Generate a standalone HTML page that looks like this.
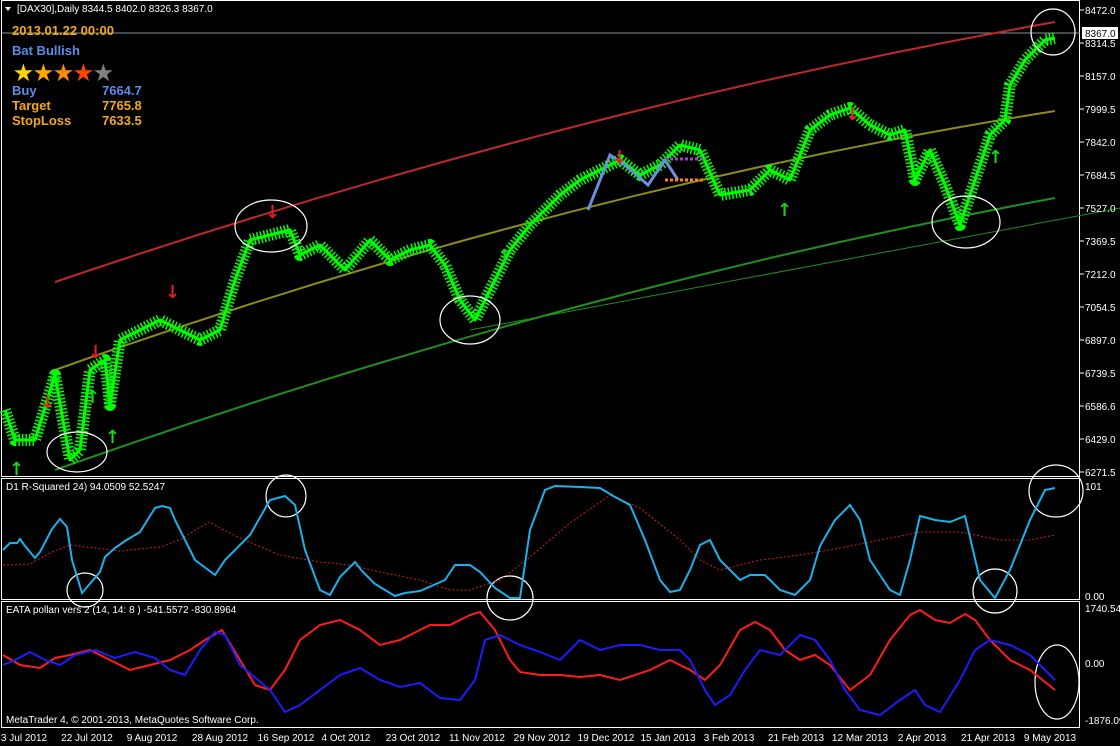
<!DOCTYPE html><html><head><meta charset="utf-8"><style>
body{margin:0;background:#000;width:1120px;height:746px;overflow:hidden;font-family:"Liberation Sans",sans-serif}
svg{display:block}
.ax{fill:#fff;font-size:10px;font-family:"Liberation Sans",sans-serif}
</style></head><body>
<svg width="1120" height="746" viewBox="0 0 1120 746" xmlns="http://www.w3.org/2000/svg">
<rect width="1120" height="746" fill="#000"/>
<rect x="1.5" y="0.5" width="1078" height="476" fill="none" stroke="#fff"/>
<rect x="1.5" y="478.5" width="1078" height="121" fill="none" stroke="#fff"/>
<rect x="1.5" y="601.5" width="1078" height="126" fill="none" stroke="#fff"/>
<line x1="2" y1="33" x2="1080" y2="33" stroke="#8a8f99"/>
<path d="M55,282 Q560,110 1055,22" stroke="#c0282b" stroke-width="2" fill="none"/>
<path d="M55,370 Q560,190 1055,111" stroke="#8b8b1a" stroke-width="2" fill="none"/>
<path d="M55,470 Q560,290 1055,198" stroke="#1f8f1f" stroke-width="2" fill="none"/>
<path d="M470,330 L1120,208" stroke="#1f8f1f" stroke-width="1" fill="none"/>
<g fill="none" stroke="#00ff00" stroke-linejoin="round">
<polyline stroke-width="12" stroke-dasharray="1.5,2" points="5,410 15,440 35,440 55,375 70,460 80,450 90,370 105,360 110,405 120,340 160,320 180,330 200,340 220,330 235,280 250,240 270,235 290,230 300,255 320,245 345,270 370,240 390,260 410,250 430,245 445,265 460,300 475,320 490,290 510,250 530,225 560,195 580,180 600,170 620,160 640,175 660,165 680,145 700,150 720,195 750,190 770,170 790,180 810,130 830,115 850,108 870,125 890,135 905,130 915,180 930,150 945,185 960,225 975,180 990,135 1005,120 1010,85 1025,60 1045,40 1055,38"/>
<polyline stroke-width="3" points="5,410 15,440 35,440 55,375 70,460 80,450 90,370 105,360 110,405 120,340 160,320 180,330 200,340 220,330 235,280 250,240 270,235 290,230 300,255 320,245 345,270 370,240 390,260 410,250 430,245 445,265 460,300 475,320 490,290 510,250 530,225 560,195 580,180 600,170 620,160 640,175 660,165 680,145 700,150 720,195 750,190 770,170 790,180 810,130 830,115 850,108 870,125 890,135 905,130 915,180 930,150 945,185 960,225 975,180 990,135 1005,120 1010,85 1025,60 1045,40 1055,38"/>
</g>
<polyline points="588,210 610,155 625,165 648,185 665,160 678,180" stroke="#6b8fe0" stroke-width="3" fill="none"/>
<line x1="665" y1="159" x2="705" y2="159" stroke="#a040d0" stroke-width="3" stroke-dasharray="3,2"/>
<line x1="665" y1="180" x2="705" y2="180" stroke="#ff7f20" stroke-width="3" stroke-dasharray="3,2"/>
<g fill="#e02020" font-size="18" font-weight="bold" font-family="DejaVu Sans">
<text x="40" y="408">↓</text><text x="88" y="358">↓</text><text x="165" y="298">↓</text><text x="265" y="218">↓</text><text x="612" y="163">↓</text><text x="845" y="120">↓</text></g>
<g fill="#20d020" font-size="18" font-weight="bold" font-family="DejaVu Sans">
<text x="9" y="475">↑</text><text x="105" y="443">↑</text><text x="85" y="403">↑</text><text x="497" y="262">↑</text><text x="777" y="216">↑</text><text x="988" y="163">↑</text></g>
<g fill="none" stroke="#fff" stroke-width="1.2">
<ellipse cx="77" cy="452" rx="30" ry="20"/><ellipse cx="271" cy="226" rx="36" ry="26"/><ellipse cx="470" cy="320" rx="30" ry="24"/><ellipse cx="966" cy="222" rx="34" ry="26"/><ellipse cx="1053" cy="32" rx="22" ry="23"/>
<ellipse cx="286" cy="496" rx="20" ry="21"/><ellipse cx="85" cy="590" rx="18" ry="17"/><ellipse cx="510" cy="598" rx="23" ry="22"/><ellipse cx="995" cy="591" rx="22" ry="22"/><ellipse cx="1056" cy="491" rx="27" ry="26"/>
<ellipse cx="1057" cy="682" rx="22" ry="37"/></g>
<polyline fill="none" stroke="#d02020" stroke-dasharray="2,2" points="3,565 30,564 50,553 70,545 95,548 120,551 160,547 180,540 200,527 210,522 220,528 240,538 280,555 320,562 350,565 380,572 420,580 450,590 470,590 500,580 530,557 570,523 610,495 640,508 680,540 700,560 720,570 760,560 800,555 840,548 880,540 920,532 960,532 1000,540 1030,540 1055,535"/>
<polyline fill="none" stroke="#1ab2ea" stroke-width="2" points="3,550 10,543 17,543 20,539 25,546 35,558 40,552 52,529 60,519 67,527 72,560 82,593 100,572 105,557 115,548 125,541 140,532 155,508 162,506 170,508 175,520 190,550 195,560 215,575 225,560 250,535 270,500 285,496 295,505 305,550 320,590 330,595 340,577 355,562 362,571 375,584 395,596 405,593 420,591 445,580 455,565 470,565 480,572 495,588 510,598 520,598 530,530 545,490 555,486 580,487 600,488 615,497 630,505 645,540 660,580 670,592 680,590 690,570 700,545 710,540 720,560 740,580 750,575 765,575 780,590 795,595 810,580 820,546 835,520 850,505 860,520 870,560 890,590 900,595 910,560 920,516 935,520 950,522 965,516 980,580 995,598 1010,570 1030,520 1045,490 1055,488"/>
<polyline fill="none" stroke="#ff1c1c" stroke-width="2" points="3,655 20,665 40,668 55,658 70,655 90,650 110,660 130,670 150,665 170,660 190,650 205,640 222,630 240,660 255,685 270,690 285,670 300,640 320,625 340,620 360,630 380,645 400,640 430,625 450,625 470,615 480,612 495,630 510,660 520,672 540,675 560,675 580,677 600,675 620,680 650,670 670,660 690,670 705,680 720,665 740,630 755,622 770,630 785,650 800,660 815,655 830,665 850,690 870,675 890,640 910,615 920,610 935,620 950,623 965,614 975,620 990,640 1010,660 1030,670 1055,690"/>
<polyline fill="none" stroke="#1c1cff" stroke-width="2" points="3,665 15,660 30,652 45,660 60,665 75,655 95,650 115,658 135,652 155,658 170,670 185,675 200,650 215,632 225,635 240,665 270,690 285,712 300,705 320,690 340,675 360,668 380,680 400,687 420,683 440,698 460,700 475,680 485,640 500,635 520,645 540,652 560,660 580,640 600,650 620,645 640,645 660,650 680,650 690,660 705,690 715,705 730,695 745,670 760,650 780,655 800,635 815,640 830,660 845,690 860,710 880,715 900,700 915,690 925,705 940,712 960,680 975,650 990,640 1010,645 1030,655 1055,680"/>
<polygon points="5,7 11,7 8,11" fill="#fff"/>
<text x="17" y="12" class="ax">[DAX30],Daily  8344.5 8402.0 8326.3 8367.0</text>
<g font-weight="bold" font-size="13">
<text x="12" y="35" fill="#f2a81d">2013.01.22 00:00</text>
<text x="12" y="55" fill="#5b8ce6">Bat Bullish</text>
<text x="14" y="80" font-size="21" fill="#ffd700">★</text><text x="34" y="80" font-size="21" fill="#ffa500">★</text><text x="54" y="80" font-size="21" fill="#ff8c00">★</text><text x="74" y="80" font-size="21" fill="#ff4500">★</text><text x="94" y="80" font-size="21" fill="#808080">★</text>
<text x="12" y="95" fill="#5b8ce6">Buy</text><text x="102" y="95" fill="#5b8ce6">7664.7</text>
<text x="12" y="110" fill="#f2a81d">Target</text><text x="102" y="110" fill="#f2a81d">7765.8</text>
<text x="12" y="125" fill="#f2a81d">StopLoss</text><text x="102" y="125" fill="#f2a81d">7633.5</text></g>
<text x="6" y="490" class="ax">D1 R-Squared 24) 94.0509 52.5247</text>
<text x="6" y="613" class="ax">EATA pollan vers 2 (14, 14: 8 ) -541.5572 -830.8964</text>
<text x="6" y="723" class="ax">MetaTrader 4, © 2001-2013, MetaQuotes Software Corp.</text>
<g class="ax">
<text x="1085" y="14">8472.0</text><text x="1085" y="47">8314.5</text><text x="1085" y="80">8157.0</text><text x="1085" y="113">7999.5</text><text x="1085" y="146">7842.0</text><text x="1085" y="179">7684.5</text><text x="1085" y="212">7527.0</text><text x="1085" y="245">7369.5</text><text x="1085" y="278">7212.0</text><text x="1085" y="311">7054.5</text><text x="1085" y="344">6897.0</text><text x="1085" y="377">6739.5</text><text x="1085" y="410">6586.6</text><text x="1085" y="443">6429.0</text><text x="1085" y="476">6271.5</text>
<text x="1085" y="490">101</text><text x="1085" y="600">0.00</text><text x="1085" y="612">1740.544</text><text x="1085" y="667">0.00</text><text x="1085" y="724">-1876.09</text></g>
<rect x="1082" y="27" width="36" height="12" fill="#fff"/><text x="1085" y="37" font-size="10" fill="#000">8367.0</text>
<g stroke="#fff"><line x1="1080" y1="10" x2="1084" y2="10"/><line x1="1080" y1="43" x2="1084" y2="43"/><line x1="1080" y1="76" x2="1084" y2="76"/><line x1="1080" y1="109" x2="1084" y2="109"/><line x1="1080" y1="142" x2="1084" y2="142"/><line x1="1080" y1="175" x2="1084" y2="175"/><line x1="1080" y1="208" x2="1084" y2="208"/><line x1="1080" y1="241" x2="1084" y2="241"/><line x1="1080" y1="274" x2="1084" y2="274"/><line x1="1080" y1="307" x2="1084" y2="307"/><line x1="1080" y1="340" x2="1084" y2="340"/><line x1="1080" y1="373" x2="1084" y2="373"/><line x1="1080" y1="406" x2="1084" y2="406"/><line x1="1080" y1="439" x2="1084" y2="439"/><line x1="1080" y1="472" x2="1084" y2="472"/></g>
<g class="ax" text-anchor="middle">
<text x="24" y="741">3 Jul 2012</text><text x="87" y="741">22 Jul 2012</text><text x="152" y="741">9 Aug 2012</text><text x="220" y="741">28 Aug 2012</text><text x="286" y="741">16 Sep 2012</text><text x="346" y="741">4 Oct 2012</text><text x="413" y="741">23 Oct 2012</text><text x="477" y="741">11 Nov 2012</text><text x="542" y="741">29 Nov 2012</text><text x="606" y="741">19 Dec 2012</text><text x="668" y="741">15 Jan 2013</text><text x="729" y="741">3 Feb 2013</text><text x="796" y="741">21 Feb 2013</text><text x="860" y="741">12 Mar 2013</text><text x="922" y="741">2 Apr 2013</text><text x="988" y="741">21 Apr 2013</text><text x="1050" y="741">9 May 2013</text></g>
</svg>
</body></html>
